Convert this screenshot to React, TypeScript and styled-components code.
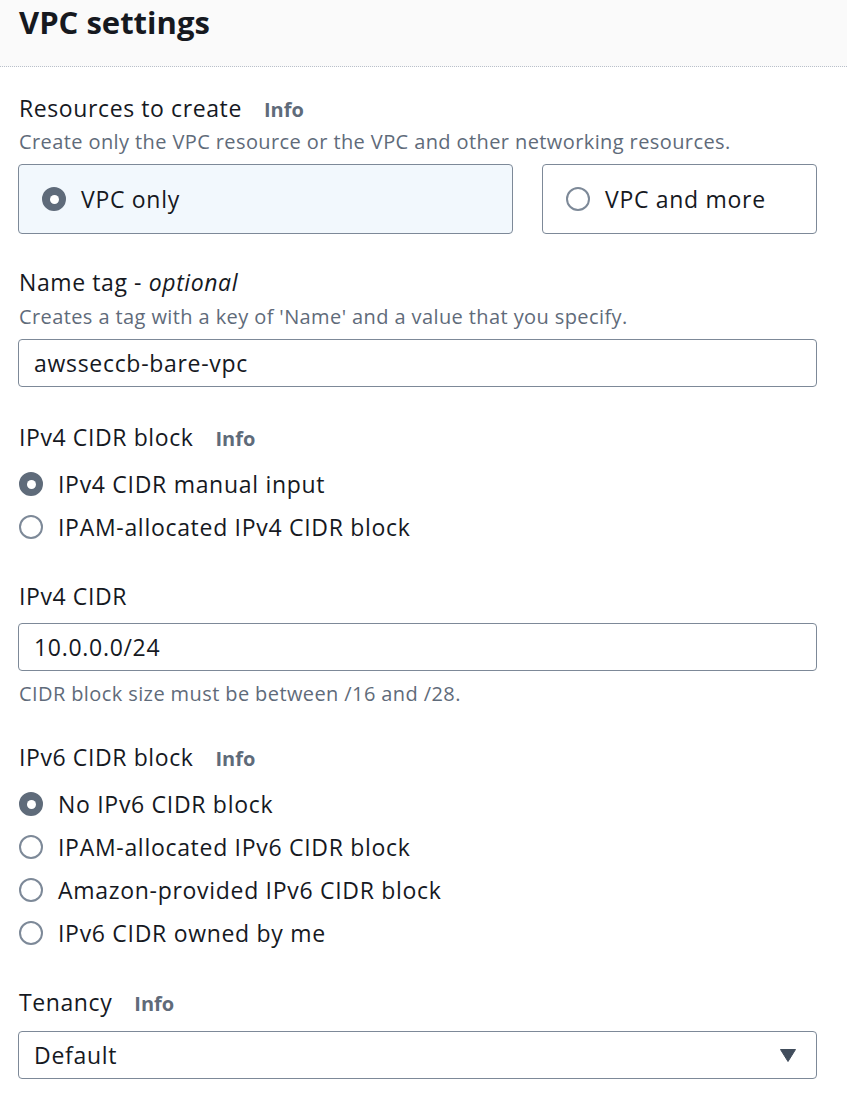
import React from "react";
import styled, { createGlobalStyle } from "styled-components";

const Global = createGlobalStyle`
  html, body { margin: 0; padding: 0; background: #ffffff; }
  body { font-family: "Open Sans", "Noto Sans", sans-serif; color: #16191f; }
  * { box-sizing: border-box; }
`;

const Page = styled.div`
  width: 847px;
  min-height: 1100px;
  background: #ffffff;
`;

const Header = styled.header`
  height: 67px;
  background: #fafafa;
  border-bottom: 1px dotted #b9c0ca;
  padding: 0 19px;
`;

const Title = styled.h2`
  margin: 0;
  font-size: 31px;
  line-height: 44px;
  font-weight: 700;
  color: #16191f;
`;

const Body = styled.div`
  padding: 0 30px 0 18px;
  display: flex;
  flex-direction: column;
`;

const Field = styled.section<{ $top: number }>`
  margin-top: ${(p) => p.$top}px;
  display: flex;
  flex-direction: column;
`;

const Label = styled.div`
  display: flex;
  align-items: baseline;
  gap: 22px;
  font-size: 23px;
  letter-spacing: 0.6px;
  line-height: 30px;
  padding-left: 1px;
  color: #16191f;
  em { font-style: italic; }
`;

const Info = styled.span`
  font-size: 20px;
  letter-spacing: 0;
  font-weight: 700;
  color: #5f6b7a;
`;

const Description = styled.div<{ $top: number }>`
  margin-top: ${(p) => p.$top}px;
  font-size: 20px;
  letter-spacing: 0.4px;
  line-height: 26px;
  padding-left: 1px;
  color: #5f6b7a;
`;

const Tiles = styled.div`
  margin-top: 9px;
  display: grid;
  grid-template-columns: 495px 275px;
  gap: 29px;
`;

const Tile = styled.div<{ $checked?: boolean }>`
  height: 70px;
  border: 1px solid #7d8998;
  border-radius: 4px;
  background: ${(p) => (p.$checked ? "#f2f8fd" : "#ffffff")};
  display: flex;
  align-items: center;
  gap: 15px;
  padding-left: 23px;
  font-size: 23px;
  letter-spacing: 0.7px;
  color: #16191f;
`;

const RadioDot = styled.span<{ $checked?: boolean }>`
  flex: none;
  width: 24px;
  height: 24px;
  border-radius: 50%;
  position: relative;
  background: ${(p) => (p.$checked ? "#5f6b7a" : "#ffffff")};
  border: 2px solid ${(p) => (p.$checked ? "#5f6b7a" : "#7d8998")};
  &::after {
    content: "";
    display: ${(p) => (p.$checked ? "block" : "none")};
    position: absolute;
    left: 50%;
    top: 50%;
    width: 9px;
    height: 9px;
    margin: -4.5px 0 0 -4.5px;
    border-radius: 50%;
    background: #ffffff;
  }
`;

const RadioList = styled.div`
  margin-top: 14px;
  display: flex;
  flex-direction: column;
  gap: 11px;
`;

const RadioRow = styled.label`
  display: flex;
  align-items: center;
  gap: 15px;
  height: 32px;
  padding-left: 1px;
  font-size: 23px;
  letter-spacing: 0.7px;
  color: #16191f;
`;

const InputBox = styled.div<{ $top: number }>`
  margin-top: ${(p) => p.$top}px;
  height: 48px;
  border: 1px solid #7d8998;
  border-radius: 4px;
  display: flex;
  align-items: center;
  justify-content: space-between;
  padding: 0 20px 0 15px;
  font-size: 23px;
  letter-spacing: 0.7px;
  color: #16191f;
  background: #ffffff;
`;

const Caret = styled.svg`
  width: 16px;
  height: 13px;
  flex: none;
`;

const Radio = ({ label, checked }: { label: string; checked?: boolean }) => (
  <RadioRow>
    <RadioDot $checked={checked} />
    <span>{label}</span>
  </RadioRow>
);

export default function App() {
  return (
    <Page>
      <Global />
      <Header>
        <Title>VPC settings</Title>
      </Header>
      <Body>
        <Field $top={26}>
          <Label>
            <span>Resources to create</span>
            <Info>Info</Info>
          </Label>
          <Description $top={4}>
            Create only the VPC resource or the VPC and other networking resources.
          </Description>
          <Tiles>
            <Tile $checked>
              <RadioDot $checked />
              <span>VPC only</span>
            </Tile>
            <Tile>
              <RadioDot />
              <span>VPC and more</span>
            </Tile>
          </Tiles>
        </Field>

        <Field $top={33}>
          <Label>
            <span>
              Name tag - <em>optional</em>
            </span>
          </Label>
          <Description $top={7}>
            Creates a tag with a key of 'Name' and a value that you specify.
          </Description>
          <InputBox $top={9}>awsseccb-bare-vpc</InputBox>
        </Field>

        <Field $top={35}>
          <Label>
            <span>IPv4 CIDR block</span>
            <Info>Info</Info>
          </Label>
          <RadioList>
            <Radio label="IPv4 CIDR manual input" checked />
            <Radio label="IPAM-allocated IPv4 CIDR block" />
          </RadioList>
        </Field>

        <Field $top={38}>
          <Label>
            <span>IPv4 CIDR</span>
          </Label>
          <InputBox $top={12}>10.0.0.0/24</InputBox>
          <Description $top={10}>CIDR block size must be between /16 and /28.</Description>
        </Field>

        <Field $top={35}>
          <Label>
            <span>IPv6 CIDR block</span>
            <Info>Info</Info>
          </Label>
          <RadioList>
            <Radio label="No IPv6 CIDR block" checked />
            <Radio label="IPAM-allocated IPv6 CIDR block" />
            <Radio label="Amazon-provided IPv6 CIDR block" />
            <Radio label="IPv6 CIDR owned by me" />
          </RadioList>
        </Field>

        <Field $top={38}>
          <Label>
            <span>Tenancy</span>
            <Info>Info</Info>
          </Label>
          <InputBox $top={12}>
            <span>Default</span>
            <Caret viewBox="0 0 16 13">
              <path d="M0.5 0.5 L15.5 0.5 L8 12.5 Z" fill="#414d5c" stroke="#414d5c" strokeLinejoin="round" />
            </Caret>
          </InputBox>
        </Field>
      </Body>
    </Page>
  );
}
